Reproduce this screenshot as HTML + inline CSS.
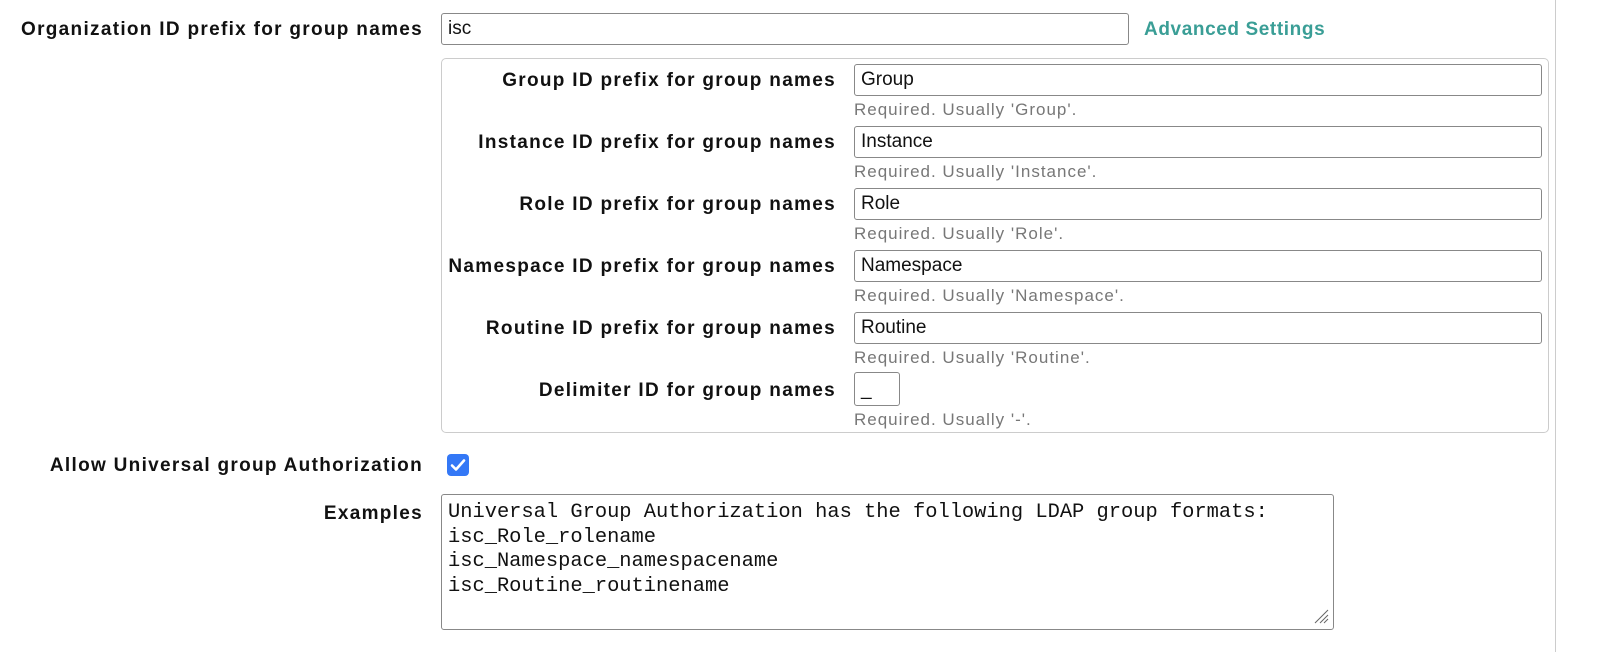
<!DOCTYPE html>
<html><head><style>
body{margin:0;width:1600px;height:652px;background:#fff;position:relative;font-family:"Liberation Sans",sans-serif;overflow:hidden}
.l{position:absolute;font-weight:bold;font-size:19px;letter-spacing:1.3px;color:#111;text-align:right;white-space:nowrap}
.i{position:absolute;border:1px solid #888;border-radius:3px;box-sizing:border-box;height:32px;font-size:19px;line-height:30px;padding-left:6px;color:#111}
.h{position:absolute;font-size:17px;letter-spacing:1px;color:#777;white-space:nowrap}
</style></head><body>
<div class="l" style="right:1177px;top:19px">Organization ID prefix for group names</div>
<div class="i" style="left:441px;top:13px;width:688px">isc</div>
<div style="position:absolute;left:1144px;top:19px;font-weight:bold;font-size:19px;letter-spacing:0.6px;color:#3a9e96">Advanced Settings</div>
<div style="position:absolute;left:441px;top:58px;width:1108px;height:375px;border:1px solid #ccc;border-radius:5px;box-sizing:border-box"></div>
<div style="position:absolute;left:1555px;top:0;width:1px;height:652px;background:#ccc"></div>

<div class="l" style="right:764px;top:70px">Group ID prefix for group names</div>
<div class="i" style="left:854px;top:64px;width:688px">Group</div>
<div class="h" style="left:854px;top:100px">Required. Usually 'Group'.</div>

<div class="l" style="right:764px;top:132px">Instance ID prefix for group names</div>
<div class="i" style="left:854px;top:126px;width:688px">Instance</div>
<div class="h" style="left:854px;top:162px">Required. Usually 'Instance'.</div>

<div class="l" style="right:764px;top:194px">Role ID prefix for group names</div>
<div class="i" style="left:854px;top:188px;width:688px">Role</div>
<div class="h" style="left:854px;top:224px">Required. Usually 'Role'.</div>

<div class="l" style="right:764px;top:256px">Namespace ID prefix for group names</div>
<div class="i" style="left:854px;top:250px;width:688px">Namespace</div>
<div class="h" style="left:854px;top:286px">Required. Usually 'Namespace'.</div>

<div class="l" style="right:764px;top:318px">Routine ID prefix for group names</div>
<div class="i" style="left:854px;top:312px;width:688px">Routine</div>
<div class="h" style="left:854px;top:348px">Required. Usually 'Routine'.</div>

<div class="l" style="right:764px;top:380px">Delimiter ID for group names</div>
<div class="i" style="left:854px;top:372px;width:46px;height:34px;line-height:34px">_</div>
<div class="h" style="left:854px;top:410px">Required. Usually '-'.</div>

<div class="l" style="right:1177px;top:455px">Allow Universal group Authorization</div>
<div style="position:absolute;left:447px;top:454px;width:22px;height:22px;background:#3478f6;border-radius:4px">
<svg width="22" height="22" viewBox="0 0 22 22"><path d="M5 11.5l4 4 8-9" stroke="#fff" stroke-width="2.6" fill="none" stroke-linecap="round" stroke-linejoin="round"/></svg></div>

<div class="l" style="right:1177px;top:503px">Examples</div>
<div style="position:absolute;left:441px;top:494px;width:893px;height:136px;border:1px solid #888;border-radius:3px;box-sizing:border-box;padding:6px 0 0 6px;font-family:'Liberation Mono',monospace;font-size:20.4px;line-height:24.5px;color:#111;white-space:pre">Universal Group Authorization has the following LDAP group formats:
isc_Role_rolename
isc_Namespace_namespacename
isc_Routine_routinename</div>
<svg style="position:absolute;left:1313px;top:608px" width="16" height="16"><path d="M2 15L15 2M7 15L15 7M11 15L15 11" stroke="#666" stroke-width="1"/></svg>
</body></html>
